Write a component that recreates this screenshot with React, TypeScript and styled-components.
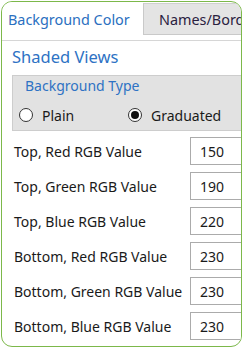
import React from 'react';
import styled, { createGlobalStyle } from 'styled-components';

const Global = createGlobalStyle`
  html, body {
    margin: 0;
    padding: 0;
    background: #fff;
  }
  body {
    font-family: "Noto Sans", "Open Sans", sans-serif;
  }
`;

const Frame = styled.div`
  box-sizing: border-box;
  margin: 1px;
  width: 241px;
  height: 346px;
  border: 1.5px solid #7cb84a;
  border-radius: 11px;
  overflow: hidden;
  display: flex;
  flex-direction: column;
  background: #fff;
`;

const TabBar = styled.div`
  display: flex;
  height: 38px;
  flex-shrink: 0;
  border-bottom: 1px solid #d6d6d6;
`;

const Tab = styled.div<{ $active?: boolean }>`
  box-sizing: border-box;
  display: flex;
  align-items: center;
  white-space: nowrap;
  overflow: hidden;
  flex-shrink: 0;
  font-size: 14.4px;
  color: ${(p) => (p.$active ? '#2a6fc0' : '#2a2140')};
  background: ${(p) => (p.$active ? '#fff' : '#e4e4e4')};
  width: ${(p) => (p.$active ? '141px' : '110px')};
  height: ${(p) => (p.$active ? '38px' : '32px')};
  margin-top: ${(p) => (p.$active ? '0' : '1px')};
  padding-left: ${(p) => (p.$active ? '6px' : '15px')};
  padding-bottom: ${(p) => (p.$active ? '4px' : '0')};
  border-left: ${(p) => (p.$active ? 'none' : '1px solid #c9c9c9')};
  border-top: ${(p) => (p.$active ? 'none' : '1px solid #d0d0d0')};
  border-bottom: ${(p) => (p.$active ? 'none' : '1px solid #c9c9c9')};
`;

const Body = styled.div`
  display: flex;
  flex-direction: column;
  padding-left: 10px;
`;

const Heading = styled.div`
  margin-top: 5px;
  font-size: 16.5px;
  line-height: 22px;
  color: #2e72c4;
`;

const Group = styled.div`
  box-sizing: border-box;
  margin-top: 7px;
  height: 56px;
  width: 240px;
  flex-shrink: 0;
  background: #e2e2e2;
  border: 1px solid #cdcdcd;
  padding: 1px 0 0 6px;
`;

const Legend = styled.div`
  font-size: 14px;
  line-height: 18px;
  color: #2e72c4;
  padding-left: 6px;
`;

const RadioRow = styled.div`
  display: flex;
  align-items: center;
  margin-top: 10px;
  height: 20px;
`;

const RadioItem = styled.label<{ $width: string }>`
  display: flex;
  align-items: center;
  width: ${(p) => p.$width};
  font-size: 14px;
  color: #1a1a1a;
`;

const Circle = styled.span<{ $checked?: boolean }>`
  box-sizing: border-box;
  width: 14px;
  height: 14px;
  border-radius: 50%;
  border: 1px solid #333;
  background: #fff;
  margin-right: 9px;
  display: flex;
  align-items: center;
  justify-content: center;
  &::after {
    content: '';
    display: ${(p) => (p.$checked ? 'block' : 'none')};
    width: 8px;
    height: 8px;
    border-radius: 50%;
    background: #111;
  }
`;

const Rows = styled.div`
  display: flex;
  flex-direction: column;
  gap: 7px;
  margin-top: 6px;
`;

const Row = styled.div`
  display: flex;
  align-items: center;
  height: 28px;
`;

const Label = styled.div`
  box-sizing: border-box;
  width: 178px;
  flex-shrink: 0;
  padding-left: 2px;
  font-size: 14px;
  color: #1a1a1a;
  white-space: nowrap;
`;

const ValueBox = styled.div`
  box-sizing: border-box;
  width: 60px;
  height: 28px;
  border: 1px solid #ababab;
  background: #fff;
  padding-left: 9px;
  display: flex;
  align-items: center;
  font-size: 14px;
  color: #1a1a1a;
  flex-shrink: 0;
`;

const values = [
  { label: 'Top, Red RGB Value', value: 150 },
  { label: 'Top, Green RGB Value', value: 190 },
  { label: 'Top, Blue RGB Value', value: 220 },
  { label: 'Bottom, Red RGB Value', value: 230 },
  { label: 'Bottom, Green RGB Value', value: 230 },
  { label: 'Bottom, Blue RGB Value', value: 230 },
];

export default function App() {
  return (
    <>
      <Global />
      <Frame>
        <TabBar>
          <Tab $active>Background Color</Tab>
          <Tab>Names/Borders</Tab>
        </TabBar>
        <Body>
          <Heading>Shaded Views</Heading>
          <Group>
            <Legend>Background Type</Legend>
            <RadioRow>
              <RadioItem $width="109px">
                <Circle />
                Plain
              </RadioItem>
              <RadioItem $width="110px">
                <Circle $checked />
                Graduated
              </RadioItem>
            </RadioRow>
          </Group>
          <Rows>
            {values.map((v) => (
              <Row key={v.label}>
                <Label>{v.label}</Label>
                <ValueBox>{v.value}</ValueBox>
              </Row>
            ))}
          </Rows>
        </Body>
      </Frame>
    </>
  );
}
